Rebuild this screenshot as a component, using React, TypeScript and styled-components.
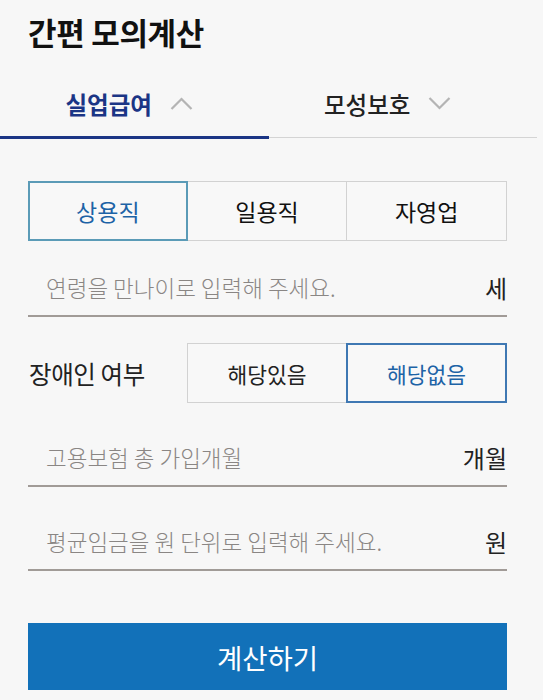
import * as React from "react";
import {useState} from "react";
import styled, {createGlobalStyle} from "styled-components";

const navy = "#1b3585";
const blue = "#1d63a6";
const lineGray = "#a19b97";
const boxGray = "#d2d2d2";
const font = `"Noto Sans CJK KR", "Noto Sans", sans-serif`;

const GlobalStyle = createGlobalStyle`
	html, body {
		margin: 0;
		padding: 0;
		background: #f7f7f7;
		font-family: ${font};
	}
`;

const Page = styled.div`
	width: 543px;
	min-height: 700px;
	background: #f7f7f7;
	color: #222;
`;

const Title = styled.h1`
	margin: 0;
	padding: 11px 0 0 28px;
	height: 59px;
	box-sizing: border-box;
	font-size: 31px;
	line-height: 42px;
	font-weight: 700;
	color: #111;
	letter-spacing: -0.3px;
`;

const TabBar = styled.div`
	display: flex;
	width: 537px;
	margin-top: 12px;
	border-bottom: 1px solid #d4d4d4;
`;

// second tab's label sits a little left of its centre in the reference
const Tab = styled.button<{$active?: boolean; $shift: number}>`
	flex: none;
	width: 50%;
	box-sizing: border-box;
	height: 68px;
	margin-bottom: -2px;
	padding: 0 ${(p) => p.$shift}px 0 0;
	display: flex;
	align-items: center;
	justify-content: center;
	gap: 18px;
	background: none;
	border: none;
	border-bottom: 3px solid ${(p) => (p.$active ? navy : "transparent")};
	font-family: ${font};
	font-size: 23.5px;
	font-weight: ${(p) => (p.$active ? 700 : 500)};
	color: ${(p) => (p.$active ? navy : "#222")};
	cursor: pointer;
`;

const Form = styled.div`
	padding: 0 36px 0 28px;
	display: flex;
	flex-direction: column;
`;

const Segment = styled.div`
	display: grid;
	grid-template-columns: repeat(3, 1fr);
	height: 60px;
	margin-top: 43px;
`;

const SegButton = styled.button<{$active?: boolean}>`
	position: relative;
	margin-left: -1px;
	background: #f8f8f8;
	border: 1px solid ${(p) => (p.$active ? "#5b9bb7" : boxGray)};
	box-shadow: ${(p) => (p.$active ? "inset 0 0 0 1px #5b9bb7" : "none")};
	z-index: ${(p) => (p.$active ? 1 : 0)};
	font-family: ${font};
	font-size: 23px;
	color: ${(p) => (p.$active ? blue : "#111")};
	cursor: pointer;

	&:first-child {
		margin-left: 0;
	}
`;

const Field = styled.label<{$top: number}>`
	display: flex;
	align-items: center;
	height: 58px;
	margin-top: ${(p) => p.$top}px;
	border-bottom: 2px solid ${lineGray};
	box-sizing: border-box;
`;

const Input = styled.input`
	flex: 1;
	min-width: 0;
	padding: 0 0 0 18px;
	border: none;
	background: transparent;
	outline: none;
	font-family: ${font};
	font-size: 22.5px;
	font-weight: 300;
	color: #222;

	&::placeholder {
		color: #8a8684;
	}
`;

const Unit = styled.span`
	font-size: 24px;
	color: #222;
`;

const Row = styled.div`
	display: flex;
	align-items: center;
	margin-top: 26px;
	height: 60px;
`;

const RowLabel = styled.span`
	width: 158px;
	padding-left: 1px;
	font-size: 24.5px;
	color: #222;
	letter-spacing: -0.4px;
`;

const Choice = styled.div`
	flex: 1;
	display: grid;
	grid-template-columns: 1fr 1fr;
	height: 100%;
`;

const ChoiceButton = styled(SegButton)`
	font-size: 21.5px;
	border-color: ${(p) => (p.$active ? "#3f78b3" : boxGray)};
	box-shadow: ${(p) => (p.$active ? "inset 0 0 0 1px #3f78b3" : "none")};
	color: ${(p) => (p.$active ? blue : "#222")};
`;

const Submit = styled.button`
	margin-top: 52px;
	height: 67px;
	border: none;
	background: #1271b9;
	color: #fff;
	font-family: ${font};
	font-size: 27.5px;
	cursor: pointer;
`;

const Chevron = ({up}: {up?: boolean}) => (
	<svg width="23" height="13" viewBox="0 0 23 13" fill="none">
		<path
			d={up ? "M1.5 12 L11.5 2 L21.5 12" : "M1.5 1 L11.5 11 L21.5 1"}
			stroke="#b4b4b4"
			strokeWidth="2.2"
		/>
	</svg>
);

export default function App() {
	const [tab, setTab] = useState(0);
	const [job, setJob] = useState(0);
	const [disabled, setDisabled] = useState(1);

	return (
		<Page>
			<GlobalStyle />
			<Title>간편 모의계산</Title>
			<TabBar>
				<Tab $active={tab === 0} $shift={10} onClick={() => setTab(0)}>
					실업급여 <Chevron up={tab === 0} />
				</Tab>
				<Tab $active={tab === 1} $shift={30} onClick={() => setTab(1)}>
					모성보호 <Chevron up={tab === 1} />
				</Tab>
			</TabBar>
			<Form>
				<Segment>
					{["상용직", "일용직", "자영업"].map((label, i) => (
						<SegButton key={label} $active={job === i} onClick={() => setJob(i)}>
							{label}
						</SegButton>
					))}
				</Segment>
				<Field $top={18}>
					<Input placeholder="연령을 만나이로 입력해 주세요." />
					<Unit>세</Unit>
				</Field>
				<Row>
					<RowLabel>장애인 여부</RowLabel>
					<Choice>
						{["해당있음", "해당없음"].map((label, i) => (
							<ChoiceButton key={label} $active={disabled === i} onClick={() => setDisabled(i)}>
								{label}
							</ChoiceButton>
						))}
					</Choice>
				</Row>
				<Field $top={26}>
					<Input placeholder="고용보험 총 가입개월" />
					<Unit>개월</Unit>
				</Field>
				<Field $top={26}>
					<Input placeholder="평균임금을 원 단위로 입력해 주세요." />
					<Unit>원</Unit>
				</Field>
				<Submit>계산하기</Submit>
			</Form>
		</Page>
	);
}
